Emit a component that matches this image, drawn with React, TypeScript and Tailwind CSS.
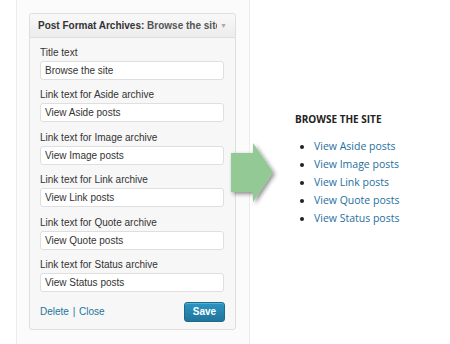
import React from 'react';

const fields = [
    { label: 'Title text', value: 'Browse the site' },
    { label: 'Link text for Aside archive', value: 'View Aside posts' },
    { label: 'Link text for Image archive', value: 'View Image posts' },
    { label: 'Link text for Link archive', value: 'View Link posts' },
    { label: 'Link text for Quote archive', value: 'View Quote posts' },
    { label: 'Link text for Status archive', value: 'View Status posts' },
];

const links = ['View Aside posts', 'View Image posts', 'View Link posts', 'View Quote posts', 'View Status posts'];

const App: React.FC = () => {
    return (
        <div className="relative flex w-[450px] h-[344px] bg-white overflow-hidden">
            {/* sidebar area */}
            <div className="ml-[16px] w-[234px] h-full border-l border-r border-[#ececec] bg-[#fbfbfb] pt-[13px] pl-[12px]">
                <div className="w-[207px] border border-[#dfdfdf] rounded-[3px] bg-[#f7f7f7] font-['Liberation_Sans',Arial,sans-serif]">
                    <div className="flex items-center h-[24px] pl-[8px] pr-[8px] border-b border-[#dfdfdf] bg-gradient-to-b from-[#f9f9f9] to-[#ececec] rounded-t-[3px]">
                        <span className="flex-1 whitespace-nowrap overflow-hidden text-[10px] font-bold text-[#333] leading-[12px]">
                            Post Format Archives: <span className="text-[#555]">Browse the site</span>
                        </span>
                        <span className="ml-[3px] text-[7px] leading-[12px] text-[#aaa]">▼</span>
                    </div>
                    <div className="pt-[8px] pl-[10px] pr-[10px] pb-[7px]">
                        <div className="flex flex-col gap-[8.4px]">
                            {fields.map((f) => (
                                <div key={f.label}>
                                    <div className="h-[14px] leading-[14px] text-[10px] text-[#333]">{f.label}</div>
                                    <input
                                        readOnly
                                        value={f.value}
                                        className="mt-[1px] block w-[184px] h-[19px] px-[4px] bg-white border border-[#dfdfdf] rounded-[3px] text-[10px] text-[#333] outline-none"
                                    />
                                </div>
                            ))}
                        </div>
                        <div className="flex items-center justify-between mt-[10px]">
                            <div className="text-[10px] text-[#21759b]">
                                Delete <span className="mx-[1px]">|</span> Close
                            </div>
                            <button className="w-[41px] h-[20px] rounded-[3px] border border-[#1e6a8d] bg-gradient-to-b from-[#2a95c5] to-[#21759b] text-white text-[10px] font-bold shadow-[0_1px_0_rgba(120,200,230,0.5)_inset]">
                                Save
                            </button>
                        </div>
                    </div>
                </div>
            </div>

            {/* arrow */}
            <svg className="absolute left-[229px] top-[140px]" width="52" height="68" viewBox="0 0 52 68">
                <defs>
                    <filter id="sh" x="-20%" y="-20%" width="150%" height="150%">
                        <feDropShadow dx="2" dy="2" stdDeviation="2" floodColor="#000" floodOpacity="0.45" />
                    </filter>
                </defs>
                <polygon points="2,13 24,13 24,3 44,32 24,62 24,52 2,52" fill="#93c994" filter="url(#sh)" />
            </svg>

            {/* rendered widget */}
            <div className="pl-[45px] pt-[112px] font-['Open_Sans',sans-serif]">
                <div className="text-[10px] font-bold text-[#222] leading-[14px]">BROWSE THE SITE</div>
                <ul className="mt-[11px] list-disc pl-[19px] marker:text-[#222]">
                    {links.map((l) => (
                        <li key={l} className="h-[18px] leading-[18px] text-[10.5px] text-[#256fa0]">
                            {l}
                        </li>
                    ))}
                </ul>
            </div>
        </div>
    );
};

export default App;
